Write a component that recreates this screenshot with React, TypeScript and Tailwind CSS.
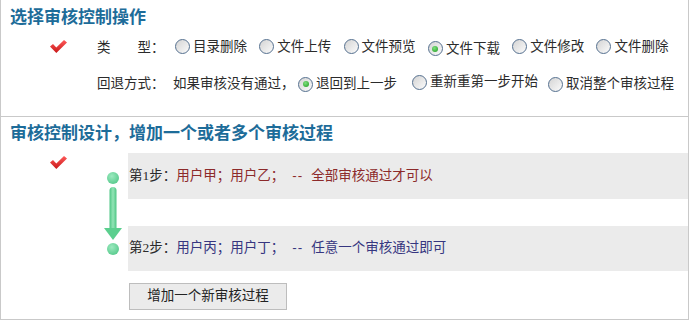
import React from "react";

const CJK = "font-['Liberation_Sans','Noto_Sans_CJK_SC',sans-serif]";

function Check() {
  return (
    <svg width="17" height="15" viewBox="0 0 17 15">
      <defs>
        <linearGradient id="chk" x1="0" y1="0" x2="0" y2="1">
          <stop offset="0" stopColor="#ff5a5a" />
          <stop offset="1" stopColor="#c81818" />
        </linearGradient>
      </defs>
      <polygon points="0,7.5 3,5 6.3,8.6 14,1 17,3.5 6.3,14" fill="url(#chk)" />
    </svg>
  );
}

function Radio({ label, checked = false }: { label: string; checked?: boolean }) {
  return (
    <span className="inline-flex items-center">
      <span className="flex h-[15px] w-[15px] shrink-0 items-center justify-center rounded-full border border-[#55708f] bg-linear-to-br from-[#d4d4d4] to-[#fbfbfb]">
        {checked && (
          <span className="h-[6px] w-[6px] rounded-full bg-[radial-gradient(circle_at_40%_35%,#7ee07e,#1f9a1f)]" />
        )}
      </span>
      <span className="ml-[3px]">{label}</span>
    </span>
  );
}

function Dot() {
  return (
    <span className="block h-[12px] w-[12px] rounded-full bg-[radial-gradient(circle_at_40%_35%,#9ceabf,#45c17f)]" />
  );
}

function Arrow() {
  return (
    <svg width="20" height="55" viewBox="0 0 20 55" className="mt-[2px]">
      <defs>
        <linearGradient id="shaft" x1="0" y1="0" x2="1" y2="0">
          <stop offset="0" stopColor="#4cc583" />
          <stop offset="0.5" stopColor="#93e4b6" />
          <stop offset="1" stopColor="#4cc583" />
        </linearGradient>
      </defs>
      <rect x="6.5" y="1" width="7" height="44" rx="3.5" fill="url(#shaft)" />
      <polygon points="1,42 19,42 10,54" fill="#5bcf8e" />
    </svg>
  );
}

export default function App() {
  const types = ["目录删除", "文件上传", "文件预览", "文件下载", "文件修改", "文件删除"];

  return (
    <div
      className={`${CJK} h-[320px] w-[689px] border-x border-b border-[#c9c9c9] bg-white text-[13.5px] text-[#2b2b2b]`}
    >
      {/* section 1 */}
      <div className="h-[117px] border-b border-[#c9c9c9] pt-[7px]">
        <h2 className="pl-[9px] text-[17px] leading-[22px] font-bold text-[#1d6c99]">
          选择审核控制操作
        </h2>

        <div className="mt-[5.5px] flex h-[28px] items-center">
          <div className="w-[96px] self-start pl-[49px] pt-[4px]">
            <Check />
          </div>
          <span className="w-[78px]">
            类<span className="ml-[27px]">型：</span>
          </span>
          {types.map((t) => (
            <span key={t} className="w-[84.3px]">
              <Radio label={t} checked={t === "文件下载"} />
            </span>
          ))}
        </div>

        <div className="mt-[7.5px] flex h-[28px] items-center pl-[96px]">
          <span className="w-[76px]">回退方式：</span>
          <span className="w-[125px]">如果审核没有通过，</span>
          <span className="w-[114px]">
            <Radio label="退回到上一步" checked />
          </span>
          <span className="w-[136px]">
            <Radio label="重新重第一步开始" />
          </span>
          <Radio label="取消整个审核过程" />
        </div>
      </div>

      {/* section 2 */}
      <div className="pt-[6px]">
        <h2 className="pl-[9px] text-[17px] leading-[22px] font-bold text-[#1d6c99]">
          审核控制设计，增加一个或者多个审核过程
        </h2>

        <div className="mt-[8px] flex">
          <div className="w-[100px] pl-[49px] pt-[2px]">
            <Check />
          </div>

          <div className="flex w-[24px] flex-col items-center pt-[19px]">
            <Dot />
            <Arrow />
            <span className="mt-[2px]">
              <Dot />
            </span>
          </div>

          <div className="ml-[3px] flex-1">
            <div className="flex h-[46px] items-center bg-[#ebebeb] pl-[1px]">
              <span>
                第<span className="font-['Liberation_Serif',serif]">1</span>步：
              </span>
              <span className="text-[#8c2a2a]">
                用户甲；用户乙；<span className="ml-[8px] tracking-[1px]">--</span>
                <span className="ml-[8px]">全部审核通过才可以</span>
              </span>
            </div>

            <div className="mt-[27px] flex h-[45px] items-center bg-[#ebebeb] pl-[1px]">
              <span>
                第<span className="font-['Liberation_Serif',serif]">2</span>步：
              </span>
              <span className="text-[#363680]">
                用户丙；用户丁；<span className="ml-[8px] tracking-[1px]">--</span>
                <span className="ml-[8px]">任意一个审核通过即可</span>
              </span>
            </div>

            <button className="mt-[12px] ml-[1px] h-[27px] w-[158px] border border-[#bdbdbd] bg-[#ebebeb] text-[13.5px] text-[#222]">
              增加一个新审核过程
            </button>
          </div>
        </div>
      </div>
    </div>
  );
}
